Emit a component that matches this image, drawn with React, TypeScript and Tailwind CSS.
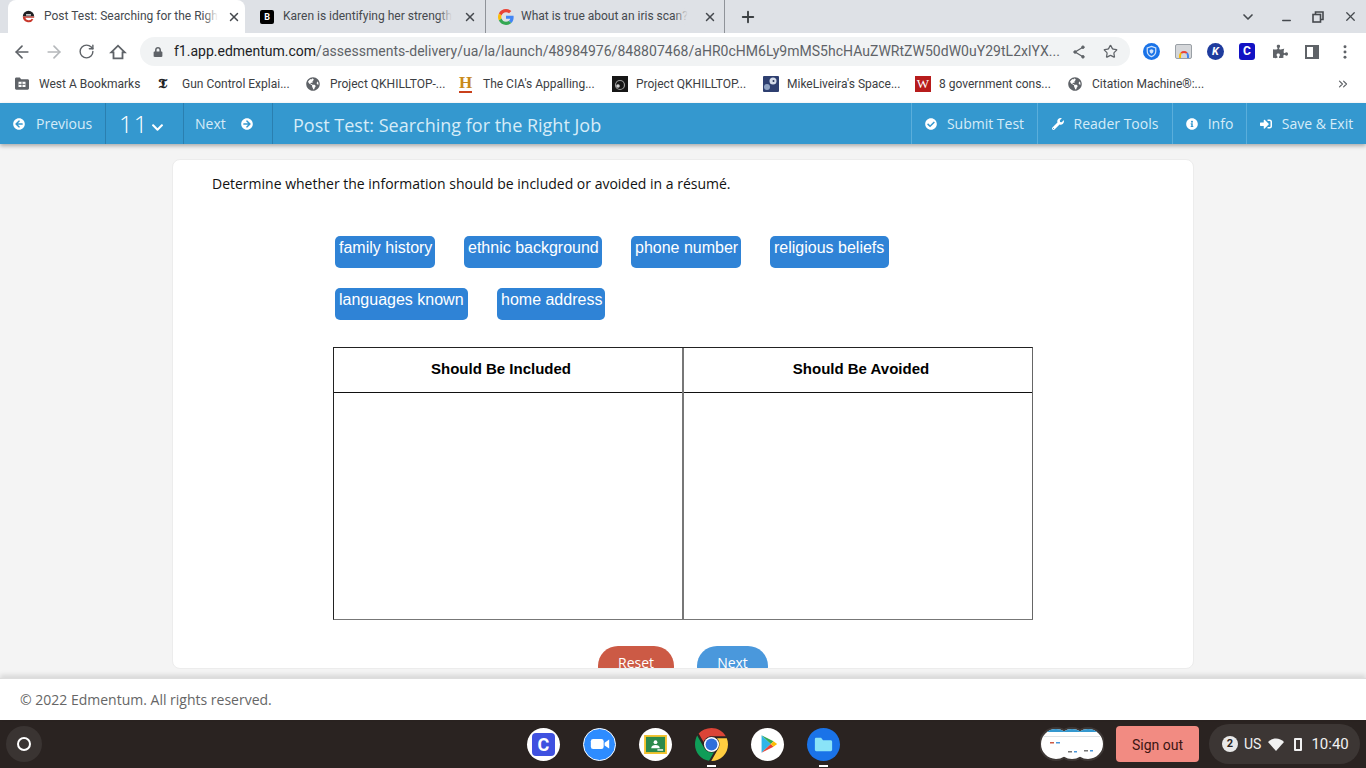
import React from "react";
import { ArrowLeft, ArrowRight, RotateCw, Star, Minus, X, Plus, ChevronDown, ChevronsRight } from "lucide-react";
import { FaArrowCircleLeft, FaArrowCircleRight, FaCheckCircle, FaWrench, FaInfoCircle, FaSignInAlt, FaChevronDown, FaPuzzlePiece, FaLock, FaGlobeAmericas } from "react-icons/fa";

function GoogleG() {
  return (
    <svg viewBox="0 0 48 48" className="w-4 h-4 shrink-0">
      <path fill="#EA4335" d="M24 9.500c3.500 0 6.700 1.200 9.200 3.600l6.900-6.900C35.900 2.400 30.400 0 24 0 14.600 0 6.500 5.400 2.600 13.200l8 6.200C12.500 13.600 17.800 9.500 24 9.500z" />
      <path fill="#4285F4" d="M46.900 24.500c0-1.600-.1-3.100-.4-4.500H24v9h12.900c-.6 3-2.200 5.500-4.700 7.200l7.700 6c4.500-4.200 7-10.300 7-17.700z" />
      <path fill="#FBBC05" d="M10.600 28.600c-.5-1.400-.8-3-.8-4.600s.3-3.200.8-4.600l-8-6.200C.9 16.500 0 20.100 0 24s.9 7.500 2.600 10.800l8-6.200z" />
      <path fill="#34A853" d="M24 48c6.500 0 11.900-2.100 15.900-5.800l-7.700-6c-2.200 1.400-4.900 2.300-8.200 2.300-6.200 0-11.500-4.100-13.400-9.900l-8 6.200C6.500 42.600 14.600 48 24 48z" />
    </svg>
  );
}

function ChromeLogo() {
  return (
    <svg viewBox="0 0 48 48" className="w-[33px] h-[33px]">
      <path fill="#DB4437" d="M24 0c8.900 0 16.600 4.800 20.800 12H24c-5.500 0-10 3.500-11.500 8.500L5.300 8C9.700 3.100 16.500 0 24 0z" />
      <path fill="#0F9D58" d="M3.200 11C1.200 14.600 0 19.200 0 24c0 12 8.800 22 20.400 23.700l7.200-12.500c-6 1.500-11.500-1-14.500-6.500z" />
      <path fill="#FFCD40" d="M46.200 15H31.800c4 3.800 5 9.500 2.300 14.500L23.700 48H24c13.300 0 24-10.700 24-24 0-3.200-.6-6.200-1.800-9z" />
      <circle cx="24" cy="24" r="11" fill="#fff" />
      <circle cx="24" cy="24" r="8.700" fill="#2f6fdc" />
    </svg>
  );
}

function EdmentumFavicon() {
  return (
    <svg viewBox="0 0 16 16" className="w-[13px] h-[13px] shrink-0">
      <path d="M8 1a7 7 0 0 1 7 7H1a7 7 0 0 1 7-7z" fill="#202124" />
      <path d="M1 8a7 7 0 0 0 13 3.600l-2-.8A4.500 4.500 0 0 1 4 9.500h11V8z" fill="#c8372b" />
      <rect x="5" y="5.200" width="6" height="1.600" fill="#fff" />
    </svg>
  );
}

function Tab({ active, icon, title, className }: { active?: boolean; icon: React.ReactNode; title: string; className: string }) {
  return (
    <div className={`flex items-center h-[33px] shrink-0 ${className} ${active ? "bg-white rounded-t-lg" : ""}`}>
      {icon}
      <div className="relative whitespace-nowrap text-xs leading-5 text-[#45494e] mb-[1px]">
        {title}
        <div className={`absolute top-0 right-0 h-5 w-[14px] bg-gradient-to-r from-transparent ${active ? "to-white" : "to-[#dee1e6]"}`} />
      </div>
      <X size={14} strokeWidth={2.5} className="text-[#45494e] shrink-0 ml-auto" />
    </div>
  );
}

function Bookmark({ icon, label, width }: { icon: React.ReactNode; label: string; width: string }) {
  return (
    <div className={`flex items-center shrink-0 ${width}`}>
      <div className="w-[24px] flex shrink-0">{icon}</div>
      <span className="text-xs text-[#3c4043] whitespace-nowrap">{label}</span>
    </div>
  );
}

function NavBtn({ icon, label, width }: { icon: React.ReactNode; label: string; width: string }) {
  return (
    <div className={`flex items-center justify-center gap-[10px] h-full border-l border-[#5aaedb] shrink-0 ${width}`}>
      {icon}
      <span>{label}</span>
    </div>
  );
}

function Chip({ label, width }: { label: string; width: string }) {
  return (
    <div className={`h-8 pl-1 rounded-[5px] bg-[#2f83d6] text-white text-base leading-[24px] whitespace-nowrap font-['Liberation_Sans',Arial,sans-serif] ${width}`}>
      {label}
    </div>
  );
}

function ShelfIcon({ bg, children, mark }: { bg: string; children: React.ReactNode; mark?: boolean }) {
  return (
    <div className="relative w-[33px] h-[33px] shrink-0">
      <div className={`w-[33px] h-[33px] rounded-full flex items-center justify-center ${bg}`}>{children}</div>
      {mark && <div className="absolute left-[12px] top-[37px] w-[9px] h-[2px] bg-white" />}
    </div>
  );
}

export default function App() {
  return (
    <div className="w-[1366px] h-[768px] overflow-hidden flex flex-col bg-white font-['Roboto',sans-serif]">
      {/* tab strip */}
      <div className="h-[33px] bg-[#dee1e6] flex items-center pl-2 shrink-0">
        <Tab active className="w-[237px] pl-[14px] pr-2 gap-[9px]" title="Post Test: Searching for the Righ" icon={<EdmentumFavicon />} />
        <div className="w-[7px]" />
        <Tab
          className="w-[234px] pl-2 pr-2 gap-[9px] border-r border-[#8f9399]"
          title="Karen is identifying her strength"
          icon={<div className="w-[14px] h-[14px] rounded-[2px] bg-black text-white text-[9px] font-bold leading-[14px] text-center shrink-0">B</div>}
        />
        <Tab className="w-[239px] pl-3 pr-[7px] gap-[7px] border-r border-[#8f9399]" title="What is true about an iris scan?" icon={<GoogleG />} />
        <Plus size={18} strokeWidth={2.5} className="text-[#3c4043] ml-[14px]" />
        <ChevronDown size={16} strokeWidth={2.5} className="text-[#45494e] ml-[483px]" />
        <Minus size={13} strokeWidth={2.5} className="text-[#45494e] ml-[24px] mt-2" />
        <svg viewBox="0 0 12 12" className="ml-[19px] w-3 h-3 text-[#45494e]" fill="none" stroke="currentColor" strokeWidth="1.600">
          <path d="M3.500 3V1h7.500v7.500H8.500" />
          <rect x="1" y="3.500" width="7.500" height="7.500" />
        </svg>
        <X size={15} strokeWidth={2} className="text-[#45494e] ml-[19px]" />
      </div>

      {/* address bar */}
      <div className="h-[37px] flex items-center shrink-0 pl-[12px] text-[#5f6368]">
        <ArrowLeft size={20} strokeWidth={2} />
        <ArrowRight size={20} strokeWidth={2} className="ml-[12px] text-[#b5b8bb]" />
        <RotateCw size={17} strokeWidth={2} className="ml-[14px]" />
        <svg viewBox="0 0 20 20" className="ml-[14px] w-[18px] h-[18px]" fill="none" stroke="currentColor" strokeWidth="2" strokeLinejoin="miter">
          <path d="M2.500 10.500L10 3l7.500 7.500h-2.500V17H5v-6.500z" />
        </svg>
        <div className="ml-[13px] w-[990px] h-[29px] rounded-full bg-[#f1f3f4] flex items-center pl-[13px] pr-[12px]">
          <FaLock size={10} className="text-[#5f6368] shrink-0" />
          <div className="ml-[11px] flex-1 whitespace-nowrap overflow-hidden text-[14px] text-[#5f6368] tracking-[0.025px]">
            <span className="text-[#202124] tracking-normal">f1.app.edmentum.com</span>/assessments-delivery/ua/la/launch/48984976/848807468/aHR0cHM6Ly9mMS5hcHAuZWRtZW50dW0uY29tL2xlYX...
          </div>
          <svg viewBox="0 0 16 16" className="ml-[10px] w-[14px] h-[14px] shrink-0" fill="currentColor" stroke="currentColor">
            <path d="M12.500 2.500L3.500 8l9 5.500" fill="none" strokeWidth="1.500" />
            <circle cx="12.500" cy="2.500" r="1.500" />
            <circle cx="3.500" cy="8" r="1.500" />
            <circle cx="12.500" cy="13.500" r="1.500" />
          </svg>
          <Star size={15} strokeWidth={2} className="ml-[17px] shrink-0" />
        </div>
        <svg viewBox="0 0 18 18" className="ml-[13px] w-[17px] h-[17px]">
          <circle cx="9" cy="9" r="9" fill="#1a73e8" />
          <path d="M9 3.500l4.500 1.700v3.500c0 2.800-2 4.800-4.500 5.800-2.500-1-4.500-3-4.500-5.800V5.200z" fill="none" stroke="#cfe3fb" strokeWidth="1.300" />
          <path d="M9 6.500l2 .8v1.500c0 1.200-.9 2.100-2 2.600-1.100-.5-2-1.400-2-2.600V7.300z" fill="#cfe3fb" />
        </svg>
        <div className="ml-[15px] relative w-[17px] h-[15px] rounded-[2px] bg-[#d5d7da] border border-[#9aa0a6] flex items-end justify-center">
          <div className="w-[10px] h-[7px] rounded-t-full border-[2px] border-b-0 border-t-[#ea4335] border-l-[#fbbc05] border-r-[#4285f4]" />
        </div>
        <div className="ml-[15px] w-[17px] h-[17px] rounded-full bg-[#1f3c9e] text-white text-[11px] italic font-bold text-center leading-[17px]">K</div>
        <div className="ml-[15px] w-[16px] h-[17px] rounded-[3px] bg-[#1212c4] text-white text-[12px] font-bold text-center leading-[17px]">C</div>
        <FaPuzzlePiece size={15} className="ml-[18px]" />
        <div className="ml-[17px] w-[14px] h-[14px] border-2 border-[#5f6368] border-r-[6px]" />
        <svg viewBox="0 0 4 16" className="ml-[24px] w-[4px] h-[14px]" fill="currentColor">
          <circle cx="2" cy="2" r="1.700" />
          <circle cx="2" cy="8" r="1.700" />
          <circle cx="2" cy="14" r="1.700" />
        </svg>
      </div>

      {/* bookmarks */}
      <div className="h-[33px] flex items-center shrink-0 pl-[15px] pr-4 pb-[6px]">
        <Bookmark
          width="w-[143px]"
          label="West A Bookmarks"
          icon={
            <svg viewBox="0 0 16 14" className="w-[14px] h-[13px]">
              <path d="M0 1.500C0 .7.700 0 1.500 0h4l1.500 2h7.500c.8 0 1.500.7 1.500 1.500v9c0 .8-.7 1.500-1.500 1.500h-13C.7 14 0 13.300 0 12.500z" fill="#5f6368" />
              <rect x="4" y="5" width="8" height="6" fill="#fff" />
              <path d="M4 8h8M8 5v6" stroke="#5f6368" strokeWidth="1" />
            </svg>
          }
        />
        <Bookmark width="w-[148px]" label="Gun Control Explai..." icon={<span className="text-[15px] font-bold leading-none text-[#202124]">𝕿</span>} />
        <Bookmark width="w-[153px]" label="Project QKHILLTOP-..." icon={<FaGlobeAmericas size={14} className="text-[#5f6368]" />} />
        <Bookmark width="w-[153px]" label="The CIA's Appalling..." icon={<span className="text-[17px] font-bold font-['Liberation_Serif',serif] leading-none text-[#c98a1b] border-b-2 border-[#c9401b]">H</span>} />
        <Bookmark
          width="w-[151px]"
          label="Project QKHILLTOP..."
          icon={
            <svg viewBox="0 0 16 16" className="w-4 h-4">
              <rect width="16" height="16" fill="#161616" />
              <circle cx="8" cy="9" r="4.500" fill="none" stroke="#9a9a9a" strokeWidth="1.200" />
              <circle cx="6" cy="10" r="1.800" fill="#d0d0d0" />
            </svg>
          }
        />
        <Bookmark
          width="w-[152px]"
          label="MikeLiveira's Space..."
          icon={
            <svg viewBox="0 0 16 16" className="w-4 h-4">
              <rect width="16" height="16" rx="1" fill="#2e3f70" />
              <circle cx="10" cy="5" r="3.500" fill="#d5dcea" />
              <circle cx="4" cy="11" r="3" fill="#8fa3c4" />
              <circle cx="10.500" cy="5" r="1" fill="#27345a" />
            </svg>
          }
        />
        <Bookmark width="w-[153px]" label="8 government cons..." icon={<div className="w-4 h-4 bg-[#b71c1c] text-white text-[13px] text-center leading-4 font-['Liberation_Serif',serif]">W</div>} />
        <Bookmark width="w-[268px]" label="Citation Machine®:..." icon={<FaGlobeAmericas size={14} className="text-[#5f6368]" />} />
        <ChevronsRight size={14} className="text-[#5f6368]" />
      </div>

      {/* app nav */}
      <div className="h-[41px] bg-[#3498cf] shadow-[0_2px_4px_rgba(0,0,0,0.3)] flex items-center text-[14px] text-[#d6ecf8] font-['Open_Sans',sans-serif] shrink-0 relative z-10">
        <div className="w-[105px] h-full flex items-center pl-[13px] gap-[11px] shrink-0">
          <FaArrowCircleLeft size={12} className="text-white" />
          <span>Previous</span>
        </div>
        <div className="w-[78px] h-full flex items-center pl-[13px] gap-[3px] border-l border-[#2a7fb0] shrink-0">
          <span className="text-[24px] font-light tracking-[1px] text-white">11</span>
          <FaChevronDown size={13} className="text-white mt-2" />
        </div>
        <div className="w-[89px] h-full flex items-center pl-[11px] gap-[15px] border-l border-[#2a7fb0] shrink-0">
          <span>Next</span>
          <FaArrowCircleRight size={12} className="text-white" />
        </div>
        <div className="flex-1 h-full flex items-center border-l border-[#2a7fb0] pl-[20px] pt-[3px] text-[18px]">Post Test: Searching for the Right Job</div>
        <NavBtn width="w-[126px]" label="Submit Test" icon={<FaCheckCircle size={12} className="text-white" />} />
        <NavBtn width="w-[135px]" label="Reader Tools" icon={<FaWrench size={12} className="text-white" />} />
        <NavBtn width="w-[74px]" label="Info" icon={<FaInfoCircle size={12} className="text-white" />} />
        <NavBtn width="w-[120px]" label="Save & Exit" icon={<FaSignInAlt size={12} className="text-white" />} />
      </div>

      {/* content */}
      <div className="flex-1 min-h-0 bg-[#f4f4f4] pt-[15px] px-[172px] pb-[9px] font-['Open_Sans',sans-serif]">
        <div className="h-full bg-white rounded-lg border border-[#ececec] overflow-hidden pt-[14px]">
          <p className="ml-[39px] text-[14px] leading-5 text-[#111]">Determine whether the information should be included or avoided in a résumé.</p>
          <div className="ml-[162px] mt-[42px] flex flex-wrap w-[640px] gap-x-[29px] gap-y-[20px]">
            <Chip width="w-[100px]" label="family history" />
            <Chip width="w-[138px]" label="ethnic background" />
            <Chip width="w-[110px]" label="phone number" />
            <Chip width="w-[119px]" label="religious beliefs" />
            <Chip width="w-[133px]" label="languages known" />
            <Chip width="w-[108px]" label="home address" />
          </div>
          <div className="ml-[160px] mt-[27px] w-[700px] h-[273px] border border-[#222] border-b-[#777] border-r-[#666] flex font-['Liberation_Sans',Arial,sans-serif]">
            <div className="w-[350px] border-r-2 border-[#777] shrink-0">
              <div className="h-[45px] border-b border-[#111] flex items-center justify-center pr-[14px] pb-[2px] text-[15px] font-bold text-black">Should Be Included</div>
            </div>
            <div className="flex-1">
              <div className="h-[45px] border-b border-[#111] flex items-center justify-center pl-[6px] pb-[2px] text-[15px] font-bold text-black">Should Be Avoided</div>
            </div>
          </div>
          <div className="ml-[425px] mt-[26px] flex gap-[23px] text-[14px] text-white">
            <div className="w-[76px] h-[40px] rounded-[20px] bg-[#cc5a45] text-center pt-[6px]">Reset</div>
            <div className="w-[71px] h-[40px] rounded-[20px] bg-[#4a98dc] text-center pt-[6px]">Next</div>
          </div>
        </div>
      </div>

      {/* footer */}
      <div className="h-[42px] bg-white border-t border-[#ddd] shadow-[0_-3px_5px_rgba(0,0,0,0.12)] flex items-center pl-5 text-[14px] text-[#666] font-['Open_Sans',sans-serif] shrink-0 relative">
        © 2022 Edmentum. All rights reserved.
      </div>

      {/* shelf */}
      <div className="h-[48px] bg-[#2a2321] flex items-center shrink-0 pl-[6px]">
        <div className="w-9 h-9 rounded-full bg-[#3a3432] flex items-center justify-center shrink-0">
          <div className="w-[14px] h-[14px] rounded-full border-[2.5px] border-white" />
        </div>
        <div className="ml-[485px] flex items-center gap-[23px]">
          <ShelfIcon bg="bg-white">
            <div className="w-[23px] h-[23px] rounded-[4px] bg-[#3f51e0] text-white text-[18px] font-bold text-center leading-[23px]">C</div>
          </ShelfIcon>
          <ShelfIcon bg="bg-[#2d8cff] border border-white">
            <svg viewBox="0 0 24 24" className="w-[22px] h-[22px]">
              <rect x="2" y="6.500" width="14" height="11" rx="2.500" fill="#fff" />
              <path d="M17 10.500l5-3.500v10l-5-3.500z" fill="#fff" />
            </svg>
          </ShelfIcon>
          <ShelfIcon bg="bg-white">
            <svg viewBox="0 0 24 20" className="w-[23px] h-[19px]">
              <rect x="1" y="1" width="22" height="18" fill="#2c8a4b" stroke="#f4c430" strokeWidth="2" />
              <circle cx="12" cy="7.500" r="2" fill="#fff" />
              <path d="M7.500 14c0-2.500 2-3.500 4.500-3.500s4.500 1 4.500 3.500z" fill="#fff" />
              <rect x="14" y="15" width="6" height="1.500" fill="#fff" />
            </svg>
          </ShelfIcon>
          <ShelfIcon bg="" mark>
            <ChromeLogo />
          </ShelfIcon>
          <ShelfIcon bg="bg-white">
            <svg viewBox="0 0 24 24" className="w-[22px] h-[22px]">
              <path d="M5 2.500l10 9.500-10 9.500z" fill="#2fb5e8" />
              <path d="M5 2.500l13 6.500-3 3z" fill="#34a853" />
              <path d="M5 21.500l13-6.500-3-3z" fill="#ea4335" />
              <path d="M18 9l4 3-4 3-3-3z" fill="#fbbc05" />
            </svg>
          </ShelfIcon>
          <ShelfIcon bg="bg-[#1a73e8]" mark>
            <svg viewBox="0 0 24 24" className="w-[23px] h-[23px]">
              <path d="M3 6.500c0-1 .8-1.500 1.500-1.500h5l2 2.500h8c.8 0 1.500.7 1.500 1.500v8.500c0 .8-.7 1.500-1.500 1.500h-15c-.8 0-1.500-.7-1.500-1.500z" fill="#8ae3f8" />
            </svg>
          </ShelfIcon>
        </div>
        <svg viewBox="0 0 64 34" className="ml-[200px] w-[64px] h-[34px] shrink-0">
          <defs>
            <clipPath id="preview-clip">
              <circle cx="16" cy="17" r="15" />
              <circle cx="32" cy="17" r="15" />
              <circle cx="48" cy="17" r="15" />
            </clipPath>
          </defs>
          <circle cx="16" cy="17" r="17" fill="#3e3836" />
          <circle cx="32" cy="17" r="17" fill="#3e3836" />
          <circle cx="48" cy="17" r="17" fill="#3e3836" />
          <g clipPath="url(#preview-clip)">
            <rect width="64" height="34" fill="#fff" />
            <rect y="2" width="64" height="3" fill="#3498cf" />
            <rect x="10" y="15" width="4" height="1.500" fill="#cc5a45" />
            <rect x="16" y="15" width="4" height="1.500" fill="#4a98dc" />
            <rect x="28" y="24" width="4" height="1.500" fill="#777" />
            <rect x="34" y="24" width="3" height="1.500" fill="#4a98dc" />
            <rect x="44" y="23" width="4" height="1.500" fill="#777" />
            <rect x="50" y="23" width="3" height="1.500" fill="#4a98dc" />
            <rect x="2" y="9" width="58" height="1" fill="#dfe3e6" />
          </g>
        </svg>
        <div className="ml-3 w-[83px] h-9 rounded-[4px] bg-[#f28b82] flex items-center justify-center pt-[2px] text-[14px] text-[#3c1512] shrink-0">Sign out</div>
        <div className="ml-[10px] w-[151px] h-10 rounded-full bg-[#3c3634] flex items-center pl-[13px] text-[#f1f1f1] shrink-0">
          <div className="w-4 h-4 rounded-full bg-[#e8e8e8] text-[#2a2321] text-[11px] font-bold text-center leading-4">2</div>
          <span className="ml-[6px] text-[14px]">US</span>
          <svg viewBox="0 0 16 16" className="w-[16px] h-[16px] ml-[7px]">
            <path d="M0 6l8 9 8-9c-2-2.200-5-3.500-8-3.500S2 3.800 0 6z" fill="#f1f1f1" />
          </svg>
          <div className="ml-[10px] relative w-[8px] h-[13px] border-2 border-[#f1f1f1] rounded-[1px]" />
          <span className="ml-[9px] text-[15px]">10:40</span>
        </div>
      </div>
    </div>
  );
}
